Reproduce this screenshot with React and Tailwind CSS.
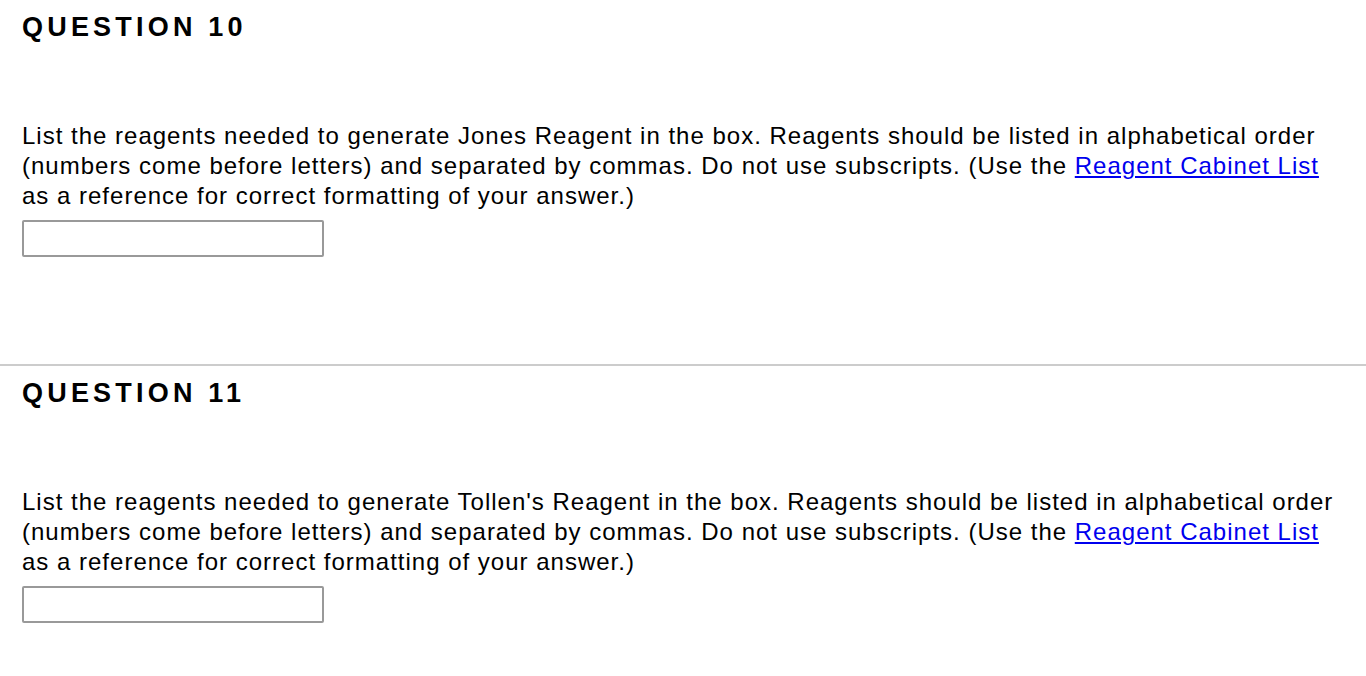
const questions = [
  { num: 10, reagent: "Jones Reagent" },
  { num: 11, reagent: "Tollen's Reagent" },
];

function Question({ num, reagent }) {
  return (
    <section className="px-[22px] pt-[11px] pb-[107px]">
      <h2 className="h-[32px] text-[27px] leading-[32px] font-bold tracking-[4.2px] text-black">
        QUESTION {num}
      </h2>
      <p className="mt-[78px] text-[24px] leading-[30px] tracking-[1px] text-black whitespace-nowrap">
        List the reagents needed to generate {reagent} in the box. Reagents should be listed in alphabetical order
        <br />
        (numbers come before letters) and separated by commas. Do not use subscripts. (Use the{" "}
        <a href="#" className="text-[#0000ee] underline">
          Reagent Cabinet List
        </a>
        <br />
        as a reference for correct formatting of your answer.)
      </p>
      <input
        type="text"
        className="mt-[9px] block w-[302px] h-[37px] border-2 border-[#999999] rounded-[2px] bg-white"
      />
    </section>
  );
}

export default function App() {
  return (
    <div className="min-h-screen bg-white font-['Liberation_Sans',Arial,sans-serif]">
      {questions.map((q, i) => (
        <div key={q.num}>
          {i > 0 && <div className="h-[2px] bg-[#cccccc]" />}
          <Question {...q} />
        </div>
      ))}
    </div>
  );
}
